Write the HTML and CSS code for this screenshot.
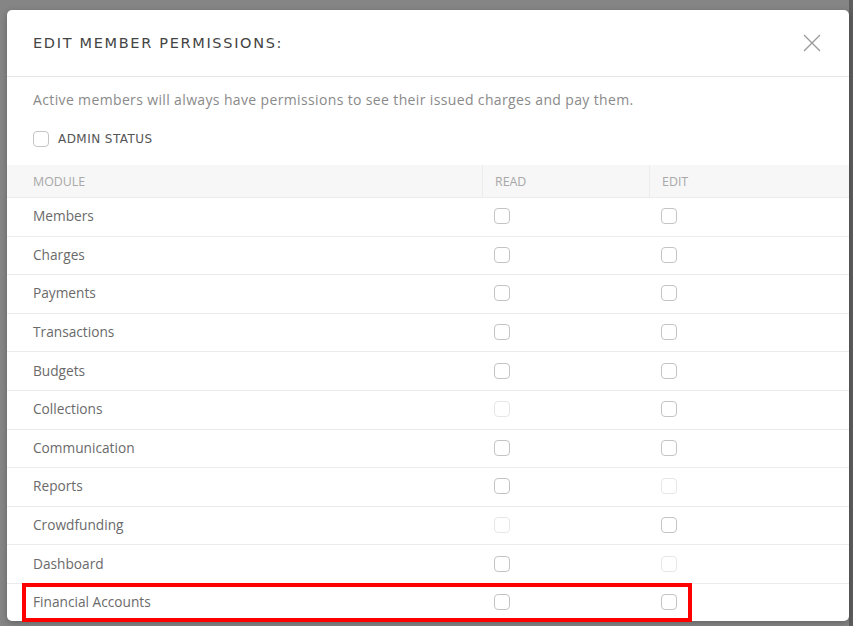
FILE: index.html
```html
<!DOCTYPE html>
<html lang="en">
<head>
<meta charset="utf-8">
<title>Edit member permissions</title>
<link rel="stylesheet" href="styles.css">
</head>
<body>
<div class="backdrop">
  <div class="modal">
    <div class="modal-header">
      <h2 class="modal-title">EDIT MEMBER PERMISSIONS:</h2>
      <button class="close" aria-label="Close">
        <svg width="18" height="18" viewBox="0 0 18 18"><path d="M1 1L17 17M17 1L1 17" stroke="#9a9a9a" stroke-width="1.3" fill="none"/></svg>
      </button>
    </div>
    <div class="modal-body">
      <p class="note">Active members will always have permissions to see their issued charges and pay them.</p>
      <label class="admin"><span class="box"></span><span class="admin-label">ADMIN STATUS</span></label>
    </div>
    <div class="table">
      <div class="row head">
        <div class="cell">MODULE</div>
        <div class="cell divided">READ</div>
        <div class="cell divided">EDIT</div>
      </div>
      <div class="row"><div class="cell name">Members</div><div class="cell"><span class="box"></span></div><div class="cell"><span class="box"></span></div></div>
      <div class="row"><div class="cell name">Charges</div><div class="cell"><span class="box"></span></div><div class="cell"><span class="box"></span></div></div>
      <div class="row"><div class="cell name">Payments</div><div class="cell"><span class="box"></span></div><div class="cell"><span class="box"></span></div></div>
      <div class="row"><div class="cell name">Transactions</div><div class="cell"><span class="box"></span></div><div class="cell"><span class="box"></span></div></div>
      <div class="row"><div class="cell name">Budgets</div><div class="cell"><span class="box"></span></div><div class="cell"><span class="box"></span></div></div>
      <div class="row"><div class="cell name">Collections</div><div class="cell"><span class="box disabled"></span></div><div class="cell"><span class="box"></span></div></div>
      <div class="row"><div class="cell name">Communication</div><div class="cell"><span class="box"></span></div><div class="cell"><span class="box"></span></div></div>
      <div class="row"><div class="cell name">Reports</div><div class="cell"><span class="box"></span></div><div class="cell"><span class="box disabled"></span></div></div>
      <div class="row"><div class="cell name">Crowdfunding</div><div class="cell"><span class="box disabled"></span></div><div class="cell"><span class="box"></span></div></div>
      <div class="row"><div class="cell name">Dashboard</div><div class="cell"><span class="box"></span></div><div class="cell"><span class="box disabled"></span></div></div>
      <div class="row"><div class="cell name">Financial Accounts</div><div class="cell"><span class="box"></span></div><div class="cell"><span class="box"></span></div></div>
    </div>
  </div>
  <div class="highlight"></div>
</div>
</body>
</html>
```
FILE: styles.css
```css
* { box-sizing: border-box; }
html, body { margin: 0; padding: 0; }
body {
  width: 853px;
  height: 626px;
  overflow: hidden;
  background: #7b7b7b;
  font-family: "Open Sans", "Liberation Sans", sans-serif;
}
.backdrop {
  position: relative;
  width: 853px;
  height: 626px;
  padding: 10px 4px 0 7px;
  background: linear-gradient(to right, #858585 0, #858585 849px, #5e5e5e 849px);
}
.modal {
  width: 842px;
  height: 611px;
  background: #fff;
  border-radius: 5px;
  overflow: hidden;
  box-shadow: 0 2px 6px rgba(0,0,0,0.25);
}
.modal-header {
  height: 67px;
  display: flex;
  align-items: center;
  justify-content: space-between;
  padding: 0 28px 0 26px;
  border-bottom: 1px solid #e6e6e6;
}
.modal-title {
  margin: 0;
  font-family: "DejaVu Sans", "Liberation Sans", sans-serif;
  font-size: 14.5px;
  font-weight: normal;
  letter-spacing: 1.68px;
  color: #444;
  margin-top: -1px;
}
.close {
  border: 0;
  background: none;
  padding: 0;
  width: 18px;
  height: 18px;
  display: flex;
  margin-top: -1px;
}
.modal-body {
  padding: 13px 26px 0 26px;
}
.note {
  margin: 0;
  font-size: 14px;
  line-height: 20px;
  letter-spacing: 0.36px;
  color: #8a8a8a;
}
.admin {
  display: flex;
  align-items: center;
  margin-top: 19px;
  height: 20px;
}
.admin .box { width: 16px; height: 16px; }
.admin-label {
  margin-left: 9px;
  font-family: "DejaVu Sans", "Liberation Sans", sans-serif;
  font-size: 12px;
  letter-spacing: 0.45px;
  color: #555;
}
.table {
  margin-top: 16px;
}
.row {
  display: grid;
  grid-template-columns: 475px 167px 1fr;
  height: 38.6px;
  border-bottom: 1px solid #ececec;
}
.row.head {
  height: 33px;
  background: #f7f7f7;
  border-bottom: 1px solid #ececec;
}
.cell {
  display: flex;
  align-items: center;
  padding-left: 12px;
  padding-bottom: 2px;
  font-size: 13.7px;
}
.cell:first-child { padding-left: 26px; }
.head .cell {
  font-size: 12.4px;
  color: #a8a8a8;
  padding-bottom: 0;
}
.head .divided { border-left: 1px solid #ececec; }
.name { color: #6a6a6a; }
.box {
  display: inline-block;
  width: 16px;
  height: 16px;
  border: 1.4px solid #c4c4c4;
  border-radius: 4px;
  background: #fff;
}
.row .box { margin-top: 1px; }
.box.disabled { border-color: #e7e7e7; }
.highlight {
  position: absolute;
  left: 22px;
  top: 583px;
  width: 670px;
  height: 39px;
  border: 4.5px solid #ff0000;
}
```
